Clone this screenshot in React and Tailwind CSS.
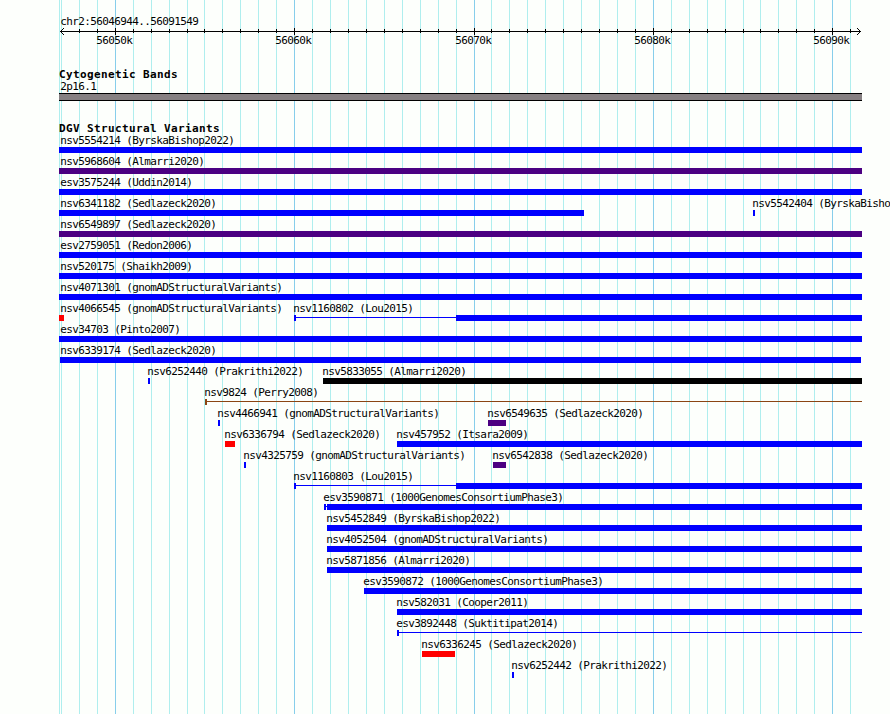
import React from 'react';

const LEFT = 59;

const MINOR = [
  59, 61, 79, 97, 133, 151, 169, 187, 204, 222, 240, 258, 276, 312, 330, 348, 366, 384, 402, 420, 438, 456,
  491, 509, 527, 545, 563, 581, 599, 617, 635, 671, 689, 707, 725, 743, 760, 778, 796, 814, 850,
];

const MAJOR = [
  { x: 115, label: '56050k' },
  { x: 294, label: '56060k' },
  { x: 474, label: '56070k' },
  { x: 653, label: '56080k' },
  { x: 832, label: '56090k' },
];

const COLORS = {
  blue: 'bg-[#0000ff]',
  indigo: 'bg-[#4b0082]',
  red: 'bg-[#ff0000]',
  black: 'bg-black',
  brown: 'bg-[#8b4513]',
};

// each row is a list of features: blocks are [start, end], line is the thin connector
const rows = [
  [{ name: 'nsv5554214 (ByrskaBishop2022)', at: 61, color: 'blue', blocks: [[59, 862]] }],
  [{ name: 'nsv5968604 (Almarri2020)', at: 61, color: 'indigo', blocks: [[59, 862]] }],
  [{ name: 'esv3575244 (Uddin2014)', at: 61, color: 'blue', blocks: [[59, 862]] }],
  [
    { name: 'nsv6341182 (Sedlazeck2020)', at: 61, color: 'blue', blocks: [[59, 584]] },
    { name: 'nsv5542404 (ByrskaBisho', at: 753, color: 'blue', blocks: [[753, 755]] },
  ],
  [{ name: 'nsv6549897 (Sedlazeck2020)', at: 61, color: 'indigo', blocks: [[59, 862]] }],
  [{ name: 'esv2759051 (Redon2006)', at: 61, color: 'blue', blocks: [[59, 862]] }],
  [{ name: 'nsv520175 (Shaikh2009)', at: 61, color: 'blue', blocks: [[59, 862]] }],
  [{ name: 'nsv4071301 (gnomADStructuralVariants)', at: 61, color: 'blue', blocks: [[59, 862]] }],
  [
    { name: 'nsv4066545 (gnomADStructuralVariants)', at: 61, color: 'red', blocks: [[59, 64]] },
    { name: 'nsv1160802 (Lou2015)', at: 294, color: 'blue', line: [296, 456], blocks: [[294, 296], [456, 862]] },
  ],
  [{ name: 'esv34703 (Pinto2007)', at: 61, color: 'blue', blocks: [[59, 862]] }],
  [{ name: 'nsv6339174 (Sedlazeck2020)', at: 61, color: 'blue', blocks: [[60, 861]] }],
  [
    { name: 'nsv6252440 (Prakrithi2022)', at: 148, color: 'blue', blocks: [[148, 150]] },
    { name: 'nsv5833055 (Almarri2020)', at: 323, color: 'black', blocks: [[323, 862]] },
  ],
  [{ name: 'nsv9824 (Perry2008)', at: 205, color: 'brown', line: [207, 862], blocks: [[205, 207]] }],
  [
    { name: 'nsv4466941 (gnomADStructuralVariants)', at: 218, color: 'blue', blocks: [[218, 220]] },
    { name: 'nsv6549635 (Sedlazeck2020)', at: 488, color: 'indigo', blocks: [[488, 506]] },
  ],
  [
    { name: 'nsv6336794 (Sedlazeck2020)', at: 225, color: 'red', blocks: [[225, 235]] },
    { name: 'nsv457952 (Itsara2009)', at: 397, color: 'blue', blocks: [[397, 862]] },
  ],
  [
    { name: 'nsv4325759 (gnomADStructuralVariants)', at: 244, color: 'blue', blocks: [[244, 246]] },
    { name: 'nsv6542838 (Sedlazeck2020)', at: 493, color: 'indigo', blocks: [[493, 506]] },
  ],
  [{ name: 'nsv1160803 (Lou2015)', at: 294, color: 'blue', line: [296, 456], blocks: [[294, 296], [456, 862]] }],
  [{ name: 'esv3590871 (1000GenomesConsortiumPhase3)', at: 324, color: 'blue', line: [326, 327], blocks: [[324, 326], [327, 862]] }],
  [{ name: 'nsv5452849 (ByrskaBishop2022)', at: 327, color: 'blue', blocks: [[327, 862]] }],
  [{ name: 'nsv4052504 (gnomADStructuralVariants)', at: 327, color: 'blue', blocks: [[327, 862]] }],
  [{ name: 'nsv5871856 (Almarri2020)', at: 327, color: 'blue', blocks: [[327, 862]] }],
  [{ name: 'esv3590872 (1000GenomesConsortiumPhase3)', at: 364, color: 'blue', blocks: [[364, 862]] }],
  [{ name: 'nsv582031 (Cooper2011)', at: 397, color: 'blue', blocks: [[397, 862]] }],
  [{ name: 'esv3892448 (Suktitipat2014)', at: 397, color: 'blue', line: [399, 862], blocks: [[397, 399]] }],
  [{ name: 'nsv6336245 (Sedlazeck2020)', at: 422, color: 'red', blocks: [[422, 455]] }],
  [{ name: 'nsv6252442 (Prakrithi2022)', at: 512, color: 'blue', blocks: [[512, 514]] }],
];

const span = ([start, end]) => ({ marginLeft: start - LEFT, width: end - start });

const GridLines = () => (
  <svg className="absolute inset-0 -z-10" width="890" height="714" shapeRendering="crispEdges">
    {MINOR.map((x) => (
      <rect key={x} x={x} y="0" width="1" height="714" fill="#afeeee" />
    ))}
    {MAJOR.map(({ x }) => (
      <rect key={x} x={x} y="0" width="1" height="714" fill="#87ceeb" />
    ))}
  </svg>
);

const Ruler = () => (
  <svg className="block h-[8px] w-[803px]" viewBox="59 27 803 8" shapeRendering="crispEdges">
    <rect x="60" y="31" width="801" height="1" />
    {MINOR.filter((x) => x > 61).map((x) => (
      <rect key={x} x={x} y="29" width="1" height="4" />
    ))}
    {MAJOR.map(({ x }) => (
      <rect key={x} x={x} y="28" width="1" height="7" />
    ))}
    {[1, 2, 3].map((d) => (
      <g key={d}>
        <rect x={60 + d} y={31 - d} width="1" height="1" />
        <rect x={60 + d} y={31 + d} width="1" height="1" />
        <rect x={860 - d} y={31 - d} width="1" height="1" />
        <rect x={860 - d} y={31 + d} width="1" height="1" />
      </g>
    ))}
  </svg>
);

const Title = ({ children }) => (
  <h2 className="h-3 text-[11px] font-bold tracking-[0.378px] whitespace-pre">{children}</h2>
);

const Row = ({ features }) => (
  <div className="h-[21px]">
    <div className="grid h-[14px] grid-cols-1">
      {features.map((f) => (
        <span key={f.name} className="col-start-1 row-start-1 whitespace-pre" style={{ marginLeft: f.at - LEFT - 0.8 }}>
          {f.name}
        </span>
      ))}
    </div>
    <div className="grid h-1.5 grid-cols-1">
      {features.map((f) => (
        <React.Fragment key={f.name}>
          {f.line && <div className={`col-start-1 row-start-1 mt-0.5 h-px ${COLORS[f.color]}`} style={span(f.line)}></div>}
          {f.blocks.map((b) => (
            <div key={b[0]} className={`col-start-1 row-start-1 h-1.5 ${COLORS[f.color]}`} style={span(b)}></div>
          ))}
        </React.Fragment>
      ))}
    </div>
  </div>
);

export default function App() {
  return (
    <div className="relative isolate h-[714px] w-[890px] overflow-hidden bg-[#fdfffc] pt-[14px] pl-[59px] font-['DejaVu_Sans_Mono',monospace] text-[11px] leading-[16px] tracking-[-0.622px] text-black">
      <GridLines />

      <div className="h-[13px] pl-[1.2px]">chr2:56046944..56091549</div>
      <Ruler />
      <div className="-mt-0.5 grid h-[14px] grid-cols-1">
        {MAJOR.map(({ x, label }) => (
          <span key={x} className="col-start-1 row-start-1" style={{ marginLeft: x - 18.8 - LEFT }}>
            {label}
          </span>
        ))}
      </div>

      <section className="mt-5">
        <Title>Cytogenetic Bands</Title>
        <div className="h-[14px] pl-[1.2px]">2p16.1</div>
        <div className="h-2 w-[803px] border-y border-black bg-[#868082]"></div>
      </section>

      <section className="mt-5">
        <Title>DGV Structural Variants</Title>
        {rows.map((features) => (
          <Row key={features[0].name} features={features} />
        ))}
      </section>
    </div>
  );
}
